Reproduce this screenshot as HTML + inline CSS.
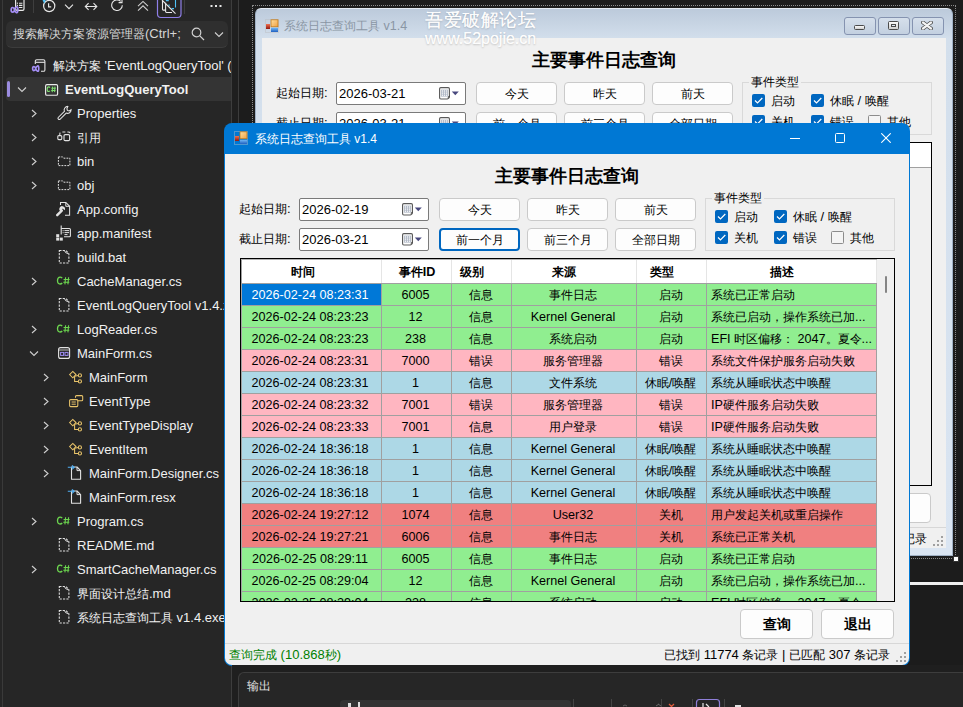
<!DOCTYPE html><html><head><meta charset="utf-8"><style>
*{box-sizing:border-box;margin:0;padding:0}
html,body{width:963px;height:707px;overflow:hidden;background:#1c1c1c;font-family:"Liberation Sans", sans-serif;}
.abs{position:absolute}
#left{position:absolute;left:0;top:0;width:232px;height:707px;background:#262626;border-right:1px solid #3d3d3d;overflow:hidden}
#left .lb{position:absolute;left:2px;top:0;width:1px;height:707px;background:#3a3a3a}
.search{position:absolute;left:6px;top:21px;width:222px;height:27px;background:#2f2f2f;border-radius:6px;border-bottom:1px solid #3c3c3c}
.search > span{position:absolute;left:7px;top:5px;font-size:13px;color:#d6d6d6;white-space:nowrap}
.tr{position:absolute;height:24px;left:0;width:232px;white-space:nowrap;color:#f1f1f1;font-size:13px}
.tr .t{position:absolute;top:5px}
.tr svg{position:absolute}
#gap{position:absolute;left:232px;top:0;width:7px;height:707px;background:#1f1f1f;border-right:1px solid #3c3c3c}
.win{position:absolute}
.client{position:absolute;background:#f0f0f0;overflow:hidden;font-size:13px;color:#000}
.lbl{position:absolute;white-space:nowrap;font-size:13px}
.dtp{position:absolute;width:130px;height:23px;background:#fff;border:1px solid #7a7a7a;border-radius:2px}
.dtp span{position:absolute;left:2px;top:3px;font-size:13px}
.btn{position:absolute;width:81px;height:23px;background:#fdfdfd;border:1px solid #cacaca;border-radius:4px;text-align:center;font-size:13px;line-height:22px}
.gb{position:absolute;border:1px solid #d9d9d9;border-radius:0}
.cb{position:absolute;width:13px;height:13px;background:#0067c0;border-radius:2px}
.cbu{position:absolute;width:13px;height:13px;background:#f4f4f4;border:1px solid #8c8c8c;border-radius:1.5px}
.grid{position:absolute;background:#f0f0f0;border:1px solid #000;overflow:hidden}
.hdr{position:absolute;left:0;top:0;height:25px;background:#fff;border-bottom:1px solid #a0a0a0}
.hc{position:absolute;top:0;height:24px;border-right:1px solid #e5e5e5}
.row{position:absolute;left:0;height:22px}
.c{position:absolute;top:0;height:22px;padding-right:2px;border-right:1px solid #a0a0a0;border-bottom:1px solid #a0a0a0;text-align:center;font-size:12.6px;line-height:23px;white-space:nowrap;overflow:hidden}
</style></head><body><div id="left"><div class="lb"></div><div class="search"><span><span style="font-size:12px">搜索解决方案资源管理器</span><span style="font-size:13px">(Ctrl+;</span></span><svg style="position:absolute;left:185px;top:6px" width="14" height="14" viewBox="0 0 14 14"><circle cx="5.5" cy="5.5" r="4.3" fill="none" stroke="#d0d0d0" stroke-width="1.2"/><path d="M8.6 8.6L13 13" stroke="#d0d0d0" stroke-width="1.2"/></svg><svg style="position:absolute;left:208px;top:10px" width="10" height="7" viewBox="0 0 10 7"><path d="M1 1.5L5 5.5 9 1.5" fill="none" stroke="#d0d0d0" stroke-width="1.1"/></svg></div><svg class="abs" style="left:0;top:0" width="232" height="20" viewBox="0 0 232 20"><path d="M15.6 -1v9.8q0 1.6 1.6 1.6h5.4q1.4 0 1.4-1.4V-1" fill="none" stroke="#e8e8e8" stroke-width="1.2"/><rect x="16.8" y="2.6" width="1.2" height="1.2" fill="#ddd"/><rect x="16.8" y="4.8" width="1.2" height="1.2" fill="#ddd"/><path d="M19 3.2h3.4M19 5.4h3.4M19 7.5h3.4" stroke="#e8e8e8" stroke-width="1.1"/><path d="M11.2 9.8q0-2.3 1.4-2.3t1.9 2.3 1.9 2.8 1.5-2.8-1.5-2.8-1.9 2.8-1.9 2.3-1.4-2.3z" fill="none" stroke="#a48ef5" stroke-width="1.7"/><rect x="33" y="0" width="1" height="13" fill="#3e3e3e"/><circle cx="49.2" cy="6" r="5.6" fill="none" stroke="#e6e6e6" stroke-width="1.2"/><path d="M48.6 3.2v3.6h2.6" fill="none" stroke="#e6e6e6" stroke-width="1.2"/><path d="M42.3 -0.5h3.6l-1.6 4.2z" fill="#4fc3f7"/><path d="M65 4.6l4 4 4-4" fill="none" stroke="#e6e6e6" stroke-width="1.1"/><path d="M85.3 6.5h11.5 M88.6 3.2l-3.3 3.3 3.3 3.3 M93.5 3.2l3.3 3.3-3.3 3.3" fill="none" stroke="#e6e6e6" stroke-width="1.1"/><path d="M122.3 5.2a5.3 5.3 0 1 1-1.6-3.8" fill="none" stroke="#e6e6e6" stroke-width="1.1"/><path d="M118.6 2.6h3.4v-3.4" fill="none" stroke="#e6e6e6" stroke-width="1.1"/><path d="M138 6.2l5-4.8 5 4.8 M138 10.6l5-4.8 5 4.8" fill="none" stroke="#cfcfcf" stroke-width="1.1"/><rect x="157.5" y="-4" width="23.5" height="21.5" rx="3.5" fill="none" stroke="#8f7fe8" stroke-width="1.2"/><path d="M162.5 1v8.3q0 0.8 0.8 0.8h2.2" fill="none" stroke="#e8e8e8" stroke-width="1.1"/><path d="M165.6 2.8v8.8q0 0.9 0.9 0.9h5.5" fill="none" stroke="#e8e8e8" stroke-width="1.1"/><path d="M165.8 0.6h3M172 -1v0.5M175.5 0v7.5M174 8.6h-2.4M169 6.5v-2" fill="none" stroke="#4fc3f7" stroke-width="1.1"/><path d="M162 0l13.5 13.6" stroke="#e8e8e8" stroke-width="1.1"/><rect x="184" y="0" width="1" height="14" fill="#3e3e3e"/><rect x="210.5" y="5" width="2" height="2" fill="#e6e6e6"/><rect x="215" y="5" width="2" height="2" fill="#e6e6e6"/><rect x="219.5" y="5" width="2" height="2" fill="#e6e6e6"/></svg><div class="tr" style="top:53px"><svg style="left:31px;top:6px" width="16" height="16" viewBox="0 0 16 16"><path d="M4.3 5V2.3q0-1.6 1.6-1.6h6.4q1.6 0 1.6 1.6v8.6q0 1.4-1.4 1.4H10" fill="none" stroke="#e6e6e6" stroke-width="1.1"/><path d="M4.3 3.3h9.6" stroke="#e6e6e6" stroke-width="1.1"/><path d="M1.6 9.6q0-2 1.3-2t1.8 2 1.8 2.6 1.3-2.6-1.3-2.6-1.8 2.6-1.8 2-1.3-2z" fill="none" stroke="#a48ef5" stroke-width="1.6"/></svg><span class="t" style="left:53px;"><span style="font-size:12px">解决方案</span><span style="font-size:13px"> &#x27;EventLogQueryTool&#x27; (</span></span></div>
<div class="tr" style="top:77px"><div class="abs" style="left:6px;top:0px;width:226px;height:24px;background:#343434;border-radius:4px 0 0 4px"></div><div class="abs" style="left:7px;top:4px;width:3px;height:16px;background:#9b8ce0;border-radius:2px"></div><svg style="left:17px;top:9px" width="10" height="7" viewBox="0 0 10 7"><path d="M1 1.5 L5 5.5 L9 1.5" fill="none" stroke="#cfcfcf" stroke-width="1.1"/></svg><svg style="left:45px;top:7px" width="14" height="12" viewBox="0 0 14 12"><rect x="0.6" y="0.6" width="12" height="10.6" rx="1.3" fill="none" stroke="#eaeaea" stroke-width="1.15"/><path d="M5 3.6q-0.5-0.7-1.3-0.7-1.5 0-1.5 2.3t1.5 2.3q0.8 0 1.3-0.7" fill="none" stroke="#7fe070" stroke-width="1.1"/><path d="M7.6 2.6l-0.4 5.5M10 2.6l-0.4 5.5M6.4 4.3h4.4M6.2 6.4h4.4" stroke="#7fe070" stroke-width="1.05"/></svg><span class="t" style="left:65px;font-weight:bold;"><span style="font-size:13px">EventLogQueryTool</span></span></div>
<div class="tr" style="top:101px"><svg style="left:30px;top:8px" width="8" height="9" viewBox="0 0 8 9"><path d="M2 1 L6 4.5 L2 8" fill="none" stroke="#cfcfcf" stroke-width="1.1"/></svg><svg style="left:53px;top:2px" width="20" height="20" viewBox="0 0 20 20"><path d="M14.8 3.4a3.6 3.6 0 0 0-3.4 4.9L5.2 14.5a1.3 1.3 0 0 0 1.8 1.8l6.2-6.2a3.6 3.6 0 0 0 4.9-3.4l-2 1.2-1.7-0.5-0.5-1.7z" fill="none" stroke="#e2e2e2" stroke-width="1.05"/></svg><span class="t" style="left:77px;"><span style="font-size:13px">Properties</span></span></div>
<div class="tr" style="top:125px"><svg style="left:30px;top:8px" width="8" height="9" viewBox="0 0 8 9"><path d="M2 1 L6 4.5 L2 8" fill="none" stroke="#cfcfcf" stroke-width="1.1"/></svg><svg style="left:53px;top:2px" width="20" height="20" viewBox="0 0 20 20"><rect x="4.8" y="8.6" width="4" height="4" rx="1" fill="none" stroke="#e2e2e2" stroke-width="1.1"/><rect x="11" y="7.6" width="5.6" height="6" rx="1.2" fill="none" stroke="#e2e2e2" stroke-width="1.1"/><path d="M6.8 8.6V7q0-2 2-2h6.5q2 0 2 2v0.6" fill="none" stroke="#e2e2e2" stroke-width="1.1" stroke-dasharray="3 2"/></svg><span class="t" style="left:77px;"><span style="font-size:12px">引用</span></span></div>
<div class="tr" style="top:149px"><svg style="left:30px;top:8px" width="8" height="9" viewBox="0 0 8 9"><path d="M2 1 L6 4.5 L2 8" fill="none" stroke="#cfcfcf" stroke-width="1.1"/></svg><svg style="left:53px;top:2px" width="20" height="20" viewBox="0 0 20 20"><path d="M5.4 5.9h4.2l1.1 1.3h6.2v7.4H5.4z" fill="none" stroke="#e2e2e2" stroke-width="1" stroke-dasharray="1.8 1.1"/></svg><span class="t" style="left:77px;"><span style="font-size:13px">bin</span></span></div>
<div class="tr" style="top:173px"><svg style="left:30px;top:8px" width="8" height="9" viewBox="0 0 8 9"><path d="M2 1 L6 4.5 L2 8" fill="none" stroke="#cfcfcf" stroke-width="1.1"/></svg><svg style="left:53px;top:2px" width="20" height="20" viewBox="0 0 20 20"><path d="M5.4 5.9h4.2l1.1 1.3h6.2v7.4H5.4z" fill="none" stroke="#e2e2e2" stroke-width="1" stroke-dasharray="1.8 1.1"/></svg><span class="t" style="left:77px;"><span style="font-size:13px">obj</span></span></div>
<div class="tr" style="top:197px"><svg style="left:53px;top:2px" width="20" height="20" viewBox="0 0 20 20"><path d="M7.5 6V3.5h5.3l3.8 3.8v9h-4.6" fill="none" stroke="#e2e2e2" stroke-width="1.05"/><path d="M12.8 3.5v3.8h3.8" fill="none" stroke="#e2e2e2" stroke-width="1"/><path d="M4.2 16.2l4.6-4.6" stroke="#e2e2e2" stroke-width="2.4" stroke-linecap="round"/><path d="M8 12.5a2.8 2.8 0 1 1 3.6-1.2l-1.9-1.9z" fill="#e2e2e2"/></svg><span class="t" style="left:77px;"><span style="font-size:13px">App.config</span></span></div>
<div class="tr" style="top:221px"><svg style="left:53px;top:2px" width="20" height="20" viewBox="0 0 20 20"><path d="M8.2 2.5v9" stroke="#e2e2e2" stroke-width="1.1"/><path d="M8.2 5.5h8.2q1 0 1 1v6.2q0 1-1 1H11" fill="none" stroke="#e2e2e2" stroke-width="1.1"/><path d="M11.5 7.6h4.6M11.5 9.6h4.6M11.5 11.6h3" stroke="#e2e2e2" stroke-width="1"/><rect x="9.6" y="7.2" width="1" height="1" fill="#e2e2e2"/><rect x="9.6" y="9.2" width="1" height="1" fill="#e2e2e2"/><rect x="3.2" y="11.2" width="3" height="3" fill="#e2e2e2"/><rect x="3.2" y="14.6" width="3" height="3" fill="#e2e2e2"/><rect x="6.8" y="14.6" width="3" height="3" fill="#e2e2e2"/></svg><span class="t" style="left:77px;"><span style="font-size:13px">app.manifest</span></span></div>
<div class="tr" style="top:245px"><svg style="left:53px;top:2px" width="20" height="20" viewBox="0 0 20 20"><path d="M6.3 3.5h5.8q0.8 0 1.4 0.6l1.8 1.8q0.6 0.6 0.6 1.4v8.7h-9.6z" fill="none" stroke="#e2e2e2" stroke-width="1.05" stroke-dasharray="2.2 1.2"/><path d="M11.6 3.8q0.4 2.4 3.6 2.8" fill="none" stroke="#e2e2e2" stroke-width="1"/></svg><span class="t" style="left:77px;"><span style="font-size:13px">build.bat</span></span></div>
<div class="tr" style="top:269px"><svg style="left:30px;top:8px" width="8" height="9" viewBox="0 0 8 9"><path d="M2 1 L6 4.5 L2 8" fill="none" stroke="#cfcfcf" stroke-width="1.1"/></svg><svg style="left:53px;top:2px" width="20" height="20" viewBox="0 0 20 20"><path d="M9.2 7.2q-0.8-1-2.1-1-2.6 0-2.6 3.4t2.6 3.4q1.3 0 2.1-1" fill="none" stroke="#6cd64f" stroke-width="1.3"/><path d="M12.6 6.2l-0.7 7.2M15.6 6.2l-0.7 7.2M10.6 8.5h6M10.3 11.2h6" stroke="#6cd64f" stroke-width="1.1"/></svg><span class="t" style="left:77px;"><span style="font-size:13px">CacheManager.cs</span></span></div>
<div class="tr" style="top:293px"><svg style="left:53px;top:2px" width="20" height="20" viewBox="0 0 20 20"><path d="M6.3 3.5h5.8q0.8 0 1.4 0.6l1.8 1.8q0.6 0.6 0.6 1.4v8.7h-9.6z" fill="none" stroke="#e2e2e2" stroke-width="1.05" stroke-dasharray="2.2 1.2"/><path d="M11.6 3.8q0.4 2.4 3.6 2.8" fill="none" stroke="#e2e2e2" stroke-width="1"/></svg><span class="t" style="left:77px;"><span style="font-size:13px">EventLogQueryTool v1.4.zip</span></span></div>
<div class="tr" style="top:317px"><svg style="left:30px;top:8px" width="8" height="9" viewBox="0 0 8 9"><path d="M2 1 L6 4.5 L2 8" fill="none" stroke="#cfcfcf" stroke-width="1.1"/></svg><svg style="left:53px;top:2px" width="20" height="20" viewBox="0 0 20 20"><path d="M9.2 7.2q-0.8-1-2.1-1-2.6 0-2.6 3.4t2.6 3.4q1.3 0 2.1-1" fill="none" stroke="#6cd64f" stroke-width="1.3"/><path d="M12.6 6.2l-0.7 7.2M15.6 6.2l-0.7 7.2M10.6 8.5h6M10.3 11.2h6" stroke="#6cd64f" stroke-width="1.1"/></svg><span class="t" style="left:77px;"><span style="font-size:13px">LogReader.cs</span></span></div>
<div class="tr" style="top:341px"><svg style="left:29px;top:9px" width="10" height="7" viewBox="0 0 10 7"><path d="M1 1.5 L5 5.5 L9 1.5" fill="none" stroke="#cfcfcf" stroke-width="1.1"/></svg><svg style="left:53px;top:2px" width="20" height="20" viewBox="0 0 20 20"><rect x="5.6" y="4.6" width="11" height="10.8" rx="2" fill="none" stroke="#e2e2e2" stroke-width="1.1"/><path d="M5.6 7h11" stroke="#e2e2e2" stroke-width="0.8"/><rect x="7.6" y="9.4" width="3" height="3" fill="none" stroke="#9d8cf0" stroke-width="1"/><rect x="12" y="9.4" width="3" height="3" fill="none" stroke="#9d8cf0" stroke-width="1"/></svg><span class="t" style="left:77px;"><span style="font-size:13px">MainForm.cs</span></span></div>
<div class="tr" style="top:365px"><svg style="left:42px;top:8px" width="8" height="9" viewBox="0 0 8 9"><path d="M2 1 L6 4.5 L2 8" fill="none" stroke="#cfcfcf" stroke-width="1.1"/></svg><svg style="left:65px;top:2px" width="20" height="20" viewBox="0 0 20 20"><path d="M4.6 7.6l3.2-3.2 3.2 3.2-3.2 3.2z" fill="none" stroke="#e9c46a" stroke-width="1.05"/><path d="M9.6 9.4v5h3.6M9.4 9.2l4 -0.6" fill="none" stroke="#e9c46a" stroke-width="1.05"/><circle cx="14.9" cy="8.4" r="1.6" fill="none" stroke="#e9c46a" stroke-width="1.05"/><circle cx="14.9" cy="14.4" r="1.6" fill="none" stroke="#e9c46a" stroke-width="1.05"/></svg><span class="t" style="left:89px;"><span style="font-size:13px">MainForm</span></span></div>
<div class="tr" style="top:389px"><svg style="left:42px;top:8px" width="8" height="9" viewBox="0 0 8 9"><path d="M2 1 L6 4.5 L2 8" fill="none" stroke="#cfcfcf" stroke-width="1.1"/></svg><svg style="left:65px;top:2px" width="20" height="20" viewBox="0 0 20 20"><path d="M10.5 6.8V5.6q0-1 1-1h5.2q1 0 1 1v3.2q0 1-1 1h-4" fill="none" stroke="#e9c46a" stroke-width="1.05"/><rect x="4.6" y="8.6" width="8.2" height="7" rx="1" fill="none" stroke="#e9c46a" stroke-width="1.05"/><path d="M6.6 11h4.2M6.6 13.2h4.2" stroke="#e9c46a" stroke-width="1"/></svg><span class="t" style="left:89px;"><span style="font-size:13px">EventType</span></span></div>
<div class="tr" style="top:413px"><svg style="left:42px;top:8px" width="8" height="9" viewBox="0 0 8 9"><path d="M2 1 L6 4.5 L2 8" fill="none" stroke="#cfcfcf" stroke-width="1.1"/></svg><svg style="left:65px;top:2px" width="20" height="20" viewBox="0 0 20 20"><path d="M4.6 7.6l3.2-3.2 3.2 3.2-3.2 3.2z" fill="none" stroke="#e9c46a" stroke-width="1.05"/><path d="M9.6 9.4v5h3.6M9.4 9.2l4 -0.6" fill="none" stroke="#e9c46a" stroke-width="1.05"/><circle cx="14.9" cy="8.4" r="1.6" fill="none" stroke="#e9c46a" stroke-width="1.05"/><circle cx="14.9" cy="14.4" r="1.6" fill="none" stroke="#e9c46a" stroke-width="1.05"/></svg><span class="t" style="left:89px;"><span style="font-size:13px">EventTypeDisplay</span></span></div>
<div class="tr" style="top:437px"><svg style="left:42px;top:8px" width="8" height="9" viewBox="0 0 8 9"><path d="M2 1 L6 4.5 L2 8" fill="none" stroke="#cfcfcf" stroke-width="1.1"/></svg><svg style="left:65px;top:2px" width="20" height="20" viewBox="0 0 20 20"><path d="M4.6 7.6l3.2-3.2 3.2 3.2-3.2 3.2z" fill="none" stroke="#e9c46a" stroke-width="1.05"/><path d="M9.6 9.4v5h3.6M9.4 9.2l4 -0.6" fill="none" stroke="#e9c46a" stroke-width="1.05"/><circle cx="14.9" cy="8.4" r="1.6" fill="none" stroke="#e9c46a" stroke-width="1.05"/><circle cx="14.9" cy="14.4" r="1.6" fill="none" stroke="#e9c46a" stroke-width="1.05"/></svg><span class="t" style="left:89px;"><span style="font-size:13px">EventItem</span></span></div>
<div class="tr" style="top:461px"><svg style="left:42px;top:8px" width="8" height="9" viewBox="0 0 8 9"><path d="M2 1 L6 4.5 L2 8" fill="none" stroke="#cfcfcf" stroke-width="1.1"/></svg><svg style="left:65px;top:2px" width="20" height="20" viewBox="0 0 20 20"><path d="M6.5 4h5.5l3.6 3.6v8.7h-9.1z" fill="none" stroke="#e2e2e2" stroke-width="1.1" stroke-linejoin="round"/><path d="M12 4v3.6h3.6" fill="none" stroke="#e2e2e2" stroke-width="1"/><path d="M2.8 4.3h6.4M7 2.3l2.2 2-2.2 2" fill="none" stroke="#4fb0f5" stroke-width="1.1"/></svg><span class="t" style="left:89px;"><span style="font-size:13px">MainForm.Designer.cs</span></span></div>
<div class="tr" style="top:485px"><svg style="left:65px;top:2px" width="20" height="20" viewBox="0 0 20 20"><path d="M6.5 4h5.5l3.6 3.6v8.7h-9.1z" fill="none" stroke="#e2e2e2" stroke-width="1.1" stroke-linejoin="round"/><path d="M12 4v3.6h3.6" fill="none" stroke="#e2e2e2" stroke-width="1"/><path d="M2.8 4.3h6.4M7 2.3l2.2 2-2.2 2" fill="none" stroke="#4fb0f5" stroke-width="1.1"/></svg><span class="t" style="left:89px;"><span style="font-size:13px">MainForm.resx</span></span></div>
<div class="tr" style="top:509px"><svg style="left:30px;top:8px" width="8" height="9" viewBox="0 0 8 9"><path d="M2 1 L6 4.5 L2 8" fill="none" stroke="#cfcfcf" stroke-width="1.1"/></svg><svg style="left:53px;top:2px" width="20" height="20" viewBox="0 0 20 20"><path d="M9.2 7.2q-0.8-1-2.1-1-2.6 0-2.6 3.4t2.6 3.4q1.3 0 2.1-1" fill="none" stroke="#6cd64f" stroke-width="1.3"/><path d="M12.6 6.2l-0.7 7.2M15.6 6.2l-0.7 7.2M10.6 8.5h6M10.3 11.2h6" stroke="#6cd64f" stroke-width="1.1"/></svg><span class="t" style="left:77px;"><span style="font-size:13px">Program.cs</span></span></div>
<div class="tr" style="top:533px"><svg style="left:53px;top:2px" width="20" height="20" viewBox="0 0 20 20"><path d="M6.3 3.5h5.8q0.8 0 1.4 0.6l1.8 1.8q0.6 0.6 0.6 1.4v8.7h-9.6z" fill="none" stroke="#e2e2e2" stroke-width="1.05" stroke-dasharray="2.2 1.2"/><path d="M11.6 3.8q0.4 2.4 3.6 2.8" fill="none" stroke="#e2e2e2" stroke-width="1"/></svg><span class="t" style="left:77px;"><span style="font-size:13px">README.md</span></span></div>
<div class="tr" style="top:557px"><svg style="left:30px;top:8px" width="8" height="9" viewBox="0 0 8 9"><path d="M2 1 L6 4.5 L2 8" fill="none" stroke="#cfcfcf" stroke-width="1.1"/></svg><svg style="left:53px;top:2px" width="20" height="20" viewBox="0 0 20 20"><path d="M9.2 7.2q-0.8-1-2.1-1-2.6 0-2.6 3.4t2.6 3.4q1.3 0 2.1-1" fill="none" stroke="#6cd64f" stroke-width="1.3"/><path d="M12.6 6.2l-0.7 7.2M15.6 6.2l-0.7 7.2M10.6 8.5h6M10.3 11.2h6" stroke="#6cd64f" stroke-width="1.1"/></svg><span class="t" style="left:77px;"><span style="font-size:13px">SmartCacheManager.cs</span></span></div>
<div class="tr" style="top:581px"><svg style="left:53px;top:2px" width="20" height="20" viewBox="0 0 20 20"><path d="M6.3 3.5h5.8q0.8 0 1.4 0.6l1.8 1.8q0.6 0.6 0.6 1.4v8.7h-9.6z" fill="none" stroke="#e2e2e2" stroke-width="1.05" stroke-dasharray="2.2 1.2"/><path d="M11.6 3.8q0.4 2.4 3.6 2.8" fill="none" stroke="#e2e2e2" stroke-width="1"/></svg><span class="t" style="left:77px;"><span style="font-size:12px">界面设计总结</span><span style="font-size:13px">.md</span></span></div>
<div class="tr" style="top:605px"><svg style="left:53px;top:2px" width="20" height="20" viewBox="0 0 20 20"><path d="M6.3 3.5h5.8q0.8 0 1.4 0.6l1.8 1.8q0.6 0.6 0.6 1.4v8.7h-9.6z" fill="none" stroke="#e2e2e2" stroke-width="1.05" stroke-dasharray="2.2 1.2"/><path d="M11.6 3.8q0.4 2.4 3.6 2.8" fill="none" stroke="#e2e2e2" stroke-width="1"/></svg><span class="t" style="left:77px;"><span style="font-size:12px">系统日志查询工具</span><span style="font-size:13px"> v1.4.exe</span></span></div></div><div id="gap"></div><div class="abs" style="left:252px;top:5px;width:704px;height:554px;border:1px dotted #8a8a8a"></div><div class="win" style="left:255px;top:8px;width:698px;height:548px;background:linear-gradient(#bccadb,#d3dfec 30px,#dae5f2);border:1px solid #9fb0c4;border-top-color:#e4ebf2;border-radius:6px 6px 0 0"></div><svg class="abs" style="left:265px;top:19px" width="14" height="14" viewBox="0 0 14 14"><defs><linearGradient id="gr" x1="0" y1="0" x2="0" y2="1"><stop offset="0" stop-color="#f07050"/><stop offset="1" stop-color="#901810"/></linearGradient><linearGradient id="go" x1="0" y1="0" x2="1" y2="1"><stop offset="0" stop-color="#ffe0a0"/><stop offset="1" stop-color="#f0a040"/></linearGradient><linearGradient id="gb" x1="0" y1="0" x2="0" y2="1"><stop offset="0" stop-color="#70b8f8"/><stop offset="1" stop-color="#2060c0"/></linearGradient></defs><rect x="0.5" y="0.5" width="13" height="13" fill="none" stroke="#b8b8b8" stroke-width="0.8" stroke-dasharray="1 1"/><rect x="1" y="5" width="4" height="5" fill="url(#gr)"/><rect x="6" y="0.8" width="7" height="7" fill="url(#go)" stroke="#c07818" stroke-width="0.8"/><rect x="6" y="8.8" width="7" height="4.2" fill="url(#gb)"/></svg><div class="lbl" style="left:284px;top:18px;color:#8a96a4;font-size:13px"><span style="font-size:12px">系统日志查询工具</span><span style="font-size:12.5px"> v1.4</span></div><div class="abs" style="left:844px;top:17px;width:32px;height:18px;border:1px solid #8593b0;border-radius:3px;background:linear-gradient(#d5dfeb,#c3d0e0)"></div><div class="abs" style="left:878px;top:17px;width:32px;height:18px;border:1px solid #8593b0;border-radius:3px;background:linear-gradient(#d5dfeb,#c3d0e0)"></div><div class="abs" style="left:912px;top:17px;width:32px;height:18px;border:1px solid #8593b0;border-radius:3px;background:linear-gradient(#d5dfeb,#c3d0e0)"></div><div class="abs" style="left:854px;top:25px;width:11px;height:5px;border:1px solid #4a4a4a;background:linear-gradient(#fafafa,#d0d0d0);border-radius:1.5px"></div><div class="abs" style="left:888px;top:21px;width:11px;height:9px;border:1.5px solid #4a4a4a;background:linear-gradient(#fafafa,#d0d0d0);border-radius:1.5px"></div><div class="abs" style="left:891px;top:24px;width:5px;height:3px;border:1px solid #4a4a4a;background:#dfe8f2"></div><svg class="abs" style="left:921px;top:21px" width="12" height="9" viewBox="0 0 12 9"><path d="M2 1.5l8 6 M10 1.5l-8 6" stroke="#4a4a4a" stroke-width="3.8" stroke-linecap="round"/><path d="M2 1.5l8 6 M10 1.5l-8 6" stroke="#f4f4f4" stroke-width="2.2" stroke-linecap="round"/></svg><div class="client" style="left:262px;top:38px;width:684px;height:510px"><div class="lbl" style="left:0;width:684px;top:10px;text-align:center;font-size:18px;font-weight:bold;letter-spacing:0px">主要事件日志查询</div><div class="lbl" style="left:14px;top:47px"><span style="font-size:12px">起始日期</span><span style="font-size:13px">:</span></div><div class="lbl" style="left:14px;top:77px"><span style="font-size:12px">截止日期</span><span style="font-size:13px">:</span></div><div class="dtp" style="left:74px;top:44px"><span>2026-03-21</span><svg style="position:absolute;left:102px;top:4px" width="22" height="13" viewBox="0 0 22 13"><path d="M1.8 0.6h7.4q1.2 0 1.2 1.2v8q0 0.6-0.6 1.2l-0.4 0.4q-0.6 0.6-1.2 0.6H1.8q-1.2 0-1.2-1.2V1.8q0-1.2 1.2-1.2z" fill="#fff" stroke="#5a5a5a" stroke-width="1.15"/><rect x="2" y="2.6" width="7" height="7" fill="#b0b8c6"/><g fill="#fff"><rect x="2.8" y="3.4" width="1.2" height="1.2"/><rect x="4.9" y="3.4" width="1.2" height="1.2"/><rect x="7" y="3.4" width="1.2" height="1.2"/><rect x="2.8" y="5.5" width="1.2" height="1.2"/><rect x="4.9" y="5.5" width="1.2" height="1.2"/><rect x="7" y="5.5" width="1.2" height="1.2"/><rect x="2.8" y="7.6" width="1.2" height="1.2"/><rect x="4.9" y="7.6" width="1.2" height="1.2"/><rect x="7" y="7.6" width="1.2" height="1.2"/></g><path d="M8.4 10.6l2-2v2z" fill="#333"/><path d="M12.8 4.4h7l-3.5 3.8z" fill="#48487e"/></svg></div><div class="dtp" style="left:74px;top:74px"><span>2026-03-21</span><svg style="position:absolute;left:102px;top:4px" width="22" height="13" viewBox="0 0 22 13"><path d="M1.8 0.6h7.4q1.2 0 1.2 1.2v8q0 0.6-0.6 1.2l-0.4 0.4q-0.6 0.6-1.2 0.6H1.8q-1.2 0-1.2-1.2V1.8q0-1.2 1.2-1.2z" fill="#fff" stroke="#5a5a5a" stroke-width="1.15"/><rect x="2" y="2.6" width="7" height="7" fill="#b0b8c6"/><g fill="#fff"><rect x="2.8" y="3.4" width="1.2" height="1.2"/><rect x="4.9" y="3.4" width="1.2" height="1.2"/><rect x="7" y="3.4" width="1.2" height="1.2"/><rect x="2.8" y="5.5" width="1.2" height="1.2"/><rect x="4.9" y="5.5" width="1.2" height="1.2"/><rect x="7" y="5.5" width="1.2" height="1.2"/><rect x="2.8" y="7.6" width="1.2" height="1.2"/><rect x="4.9" y="7.6" width="1.2" height="1.2"/><rect x="7" y="7.6" width="1.2" height="1.2"/></g><path d="M8.4 10.6l2-2v2z" fill="#333"/><path d="M12.8 4.4h7l-3.5 3.8z" fill="#48487e"/></svg></div><div class="btn" style="left:214px;top:44px"><span style="font-size:12px">今天</span></div><div class="btn" style="left:302px;top:44px"><span style="font-size:12px">昨天</span></div><div class="btn" style="left:390px;top:44px"><span style="font-size:12px">前天</span></div><div class="btn" style="left:214px;top:74px;"><span style="font-size:12px">前一个月</span></div><div class="btn" style="left:302px;top:74px;"><span style="font-size:12px">前三个月</span></div><div class="btn" style="left:390px;top:74px;"><span style="font-size:12px">全部日期</span></div><div class="gb" style="left:480px;top:44px;width:190px;height:53px"></div><div class="lbl" style="left:487px;top:36px;background:#f0f0f0;padding:0 2px;font-size:13px"><span style="font-size:12px">事件类型</span></div><div class="cb" style="left:490px;top:56px"><svg style="position:absolute;left:0;top:0" width="13" height="13" viewBox="0 0 13 13"><path d="M3 6.5l2.5 2.5 4.8-5" fill="none" stroke="#fff" stroke-width="1.2"/></svg></div><div class="lbl" style="left:509px;top:55px"><span style="font-size:12px">启动</span></div><div class="cb" style="left:549px;top:56px"><svg style="position:absolute;left:0;top:0" width="13" height="13" viewBox="0 0 13 13"><path d="M3 6.5l2.5 2.5 4.8-5" fill="none" stroke="#fff" stroke-width="1.2"/></svg></div><div class="lbl" style="left:568px;top:55px"><span style="font-size:12px">休眠</span><span style="font-size:13px"> / </span><span style="font-size:12px">唤醒</span></div><div class="cb" style="left:490px;top:77px"><svg style="position:absolute;left:0;top:0" width="13" height="13" viewBox="0 0 13 13"><path d="M3 6.5l2.5 2.5 4.8-5" fill="none" stroke="#fff" stroke-width="1.2"/></svg></div><div class="lbl" style="left:509px;top:76px"><span style="font-size:12px">关机</span></div><div class="cb" style="left:549px;top:77px"><svg style="position:absolute;left:0;top:0" width="13" height="13" viewBox="0 0 13 13"><path d="M3 6.5l2.5 2.5 4.8-5" fill="none" stroke="#fff" stroke-width="1.2"/></svg></div><div class="lbl" style="left:568px;top:76px"><span style="font-size:12px">错误</span></div><div class="cbu" style="left:606px;top:77px"></div><div class="lbl" style="left:625px;top:76px"><span style="font-size:12px">其他</span></div><div class="grid" style="left:15px;top:104px;width:655px;height:344px"><div class="hdr" style="width:654px"><div class="abs" style="left:22px;width:80px;top:0;height:25px;line-height:25px;text-align:center;font-weight:bold"><span style="font-size:12px">时间</span></div><div class="abs" style="left:136px;width:80px;top:0;height:25px;line-height:25px;text-align:center;font-weight:bold"><span style="font-size:12px">事件</span><span style="font-size:12.6px">ID</span></div><div class="abs" style="left:190.6px;width:80px;top:0;height:25px;line-height:25px;text-align:center;font-weight:bold"><span style="font-size:12px">级别</span></div><div class="abs" style="left:283px;width:80px;top:0;height:25px;line-height:25px;text-align:center;font-weight:bold"><span style="font-size:12px">来源</span></div><div class="abs" style="left:380.6px;width:80px;top:0;height:25px;line-height:25px;text-align:center;font-weight:bold"><span style="font-size:12px">类型</span></div><div class="abs" style="left:501px;width:80px;top:0;height:25px;line-height:25px;text-align:center;font-weight:bold"><span style="font-size:12px">描述</span></div></div></div><div class="btn" style="left:515px;top:455px;width:73px;height:30px;line-height:28px;font-weight:bold;font-size:14px">查询</div><div class="btn" style="left:596px;top:455px;width:73px;height:30px;line-height:28px;font-weight:bold;font-size:14px">退出</div><div class="abs" style="left:0;top:489px;width:684px;height:1px;background:#d7d7d7"></div><div class="lbl" style="right:19px;top:493px"><span style="font-size:12px">已找到</span><span style="font-size:13px"> 11774 </span><span style="font-size:12px">条记录</span><span style="font-size:13px"> | </span><span style="font-size:12px">已匹配</span><span style="font-size:13px"> 307 </span><span style="font-size:12px">条记录</span></div><svg style="position:absolute;left:671px;top:498px" width="12" height="12" viewBox="0 0 12 12"><g fill="#a0a0a0"><rect x="8" y="0" width="2" height="2"/><rect x="4" y="4" width="2" height="2"/><rect x="8" y="4" width="2" height="2"/><rect x="0" y="8" width="2" height="2"/><rect x="4" y="8" width="2" height="2"/><rect x="8" y="8" width="2" height="2"/></g></svg></div><div class="abs" style="left:953px;top:556px;width:6px;height:6px;background:#fff;border:1px solid #333"></div><div class="abs" style="left:910px;top:582px;width:53px;height:3px;background:#f0f0f0"></div><div class="lbl" style="left:425px;top:8px;font-size:18px;letter-spacing:0.5px;color:rgba(255,255,255,0.95);text-shadow:0 1px 2px rgba(0,0,0,0.18),0 0 0.4px #fff">吾爱破解论坛</div><div class="lbl" style="left:425px;top:30px;font-size:16px;color:rgba(255,255,255,0.95);text-shadow:0 1px 2px rgba(0,0,0,0.2),0 0 0.4px #fff">www.52pojie.cn</div><div class="win" style="left:224px;top:123px;width:686px;height:543px;background:#0078d4;border-radius:8px;overflow:hidden"><svg class="abs" style="left:10px;top:8px" width="14" height="14" viewBox="0 0 14 14"><defs><linearGradient id="gr" x1="0" y1="0" x2="0" y2="1"><stop offset="0" stop-color="#f07050"/><stop offset="1" stop-color="#901810"/></linearGradient><linearGradient id="go" x1="0" y1="0" x2="1" y2="1"><stop offset="0" stop-color="#ffe0a0"/><stop offset="1" stop-color="#f0a040"/></linearGradient><linearGradient id="gb" x1="0" y1="0" x2="0" y2="1"><stop offset="0" stop-color="#70b8f8"/><stop offset="1" stop-color="#2060c0"/></linearGradient></defs><rect x="0.5" y="0.5" width="13" height="13" fill="none" stroke="#c8c8c8" stroke-width="0.8" stroke-dasharray="1 1"/><rect x="1" y="5" width="4" height="5" fill="url(#gr)"/><rect x="6" y="0.8" width="7" height="7" fill="url(#go)" stroke="#c07818" stroke-width="0.8"/><rect x="6" y="8.8" width="7" height="4.2" fill="url(#gb)"/></svg><div class="lbl" style="left:31px;top:8px;color:#fff;font-size:13px"><span style="font-size:12px">系统日志查询工具</span><span style="font-size:12px"> v1.4</span></div><div class="abs" style="left:566px;top:15px;width:10px;height:1px;background:#fff"></div><div class="abs" style="left:611px;top:10px;width:10px;height:10px;border:1px solid #fff;border-radius:1.5px"></div><svg class="abs" style="left:657px;top:10px" width="10" height="10" viewBox="0 0 10 10"><path d="M0.3 0.3l9.4 9.4M9.7 0.3l-9.4 9.4" stroke="#fff" stroke-width="1.1"/></svg><div class="client" style="left:1px;top:31px;width:684px;height:511px;border-radius:0 0 7px 7px"><div class="lbl" style="left:0;width:684px;top:10px;text-align:center;font-size:18px;font-weight:bold;letter-spacing:0px">主要事件日志查询</div><div class="lbl" style="left:14px;top:47px"><span style="font-size:12px">起始日期</span><span style="font-size:13px">:</span></div><div class="lbl" style="left:14px;top:77px"><span style="font-size:12px">截止日期</span><span style="font-size:13px">:</span></div><div class="dtp" style="left:74px;top:44px"><span>2026-02-19</span><svg style="position:absolute;left:102px;top:4px" width="22" height="13" viewBox="0 0 22 13"><path d="M1.8 0.6h7.4q1.2 0 1.2 1.2v8q0 0.6-0.6 1.2l-0.4 0.4q-0.6 0.6-1.2 0.6H1.8q-1.2 0-1.2-1.2V1.8q0-1.2 1.2-1.2z" fill="#fff" stroke="#5a5a5a" stroke-width="1.15"/><rect x="2" y="2.6" width="7" height="7" fill="#b0b8c6"/><g fill="#fff"><rect x="2.8" y="3.4" width="1.2" height="1.2"/><rect x="4.9" y="3.4" width="1.2" height="1.2"/><rect x="7" y="3.4" width="1.2" height="1.2"/><rect x="2.8" y="5.5" width="1.2" height="1.2"/><rect x="4.9" y="5.5" width="1.2" height="1.2"/><rect x="7" y="5.5" width="1.2" height="1.2"/><rect x="2.8" y="7.6" width="1.2" height="1.2"/><rect x="4.9" y="7.6" width="1.2" height="1.2"/><rect x="7" y="7.6" width="1.2" height="1.2"/></g><path d="M8.4 10.6l2-2v2z" fill="#333"/><path d="M12.8 4.4h7l-3.5 3.8z" fill="#48487e"/></svg></div><div class="dtp" style="left:74px;top:74px"><span>2026-03-21</span><svg style="position:absolute;left:102px;top:4px" width="22" height="13" viewBox="0 0 22 13"><path d="M1.8 0.6h7.4q1.2 0 1.2 1.2v8q0 0.6-0.6 1.2l-0.4 0.4q-0.6 0.6-1.2 0.6H1.8q-1.2 0-1.2-1.2V1.8q0-1.2 1.2-1.2z" fill="#fff" stroke="#5a5a5a" stroke-width="1.15"/><rect x="2" y="2.6" width="7" height="7" fill="#b0b8c6"/><g fill="#fff"><rect x="2.8" y="3.4" width="1.2" height="1.2"/><rect x="4.9" y="3.4" width="1.2" height="1.2"/><rect x="7" y="3.4" width="1.2" height="1.2"/><rect x="2.8" y="5.5" width="1.2" height="1.2"/><rect x="4.9" y="5.5" width="1.2" height="1.2"/><rect x="7" y="5.5" width="1.2" height="1.2"/><rect x="2.8" y="7.6" width="1.2" height="1.2"/><rect x="4.9" y="7.6" width="1.2" height="1.2"/><rect x="7" y="7.6" width="1.2" height="1.2"/></g><path d="M8.4 10.6l2-2v2z" fill="#333"/><path d="M12.8 4.4h7l-3.5 3.8z" fill="#48487e"/></svg></div><div class="btn" style="left:214px;top:44px"><span style="font-size:12px">今天</span></div><div class="btn" style="left:302px;top:44px"><span style="font-size:12px">昨天</span></div><div class="btn" style="left:390px;top:44px"><span style="font-size:12px">前天</span></div><div class="btn" style="left:214px;top:74px;border:2px solid #0067c0;line-height:20px;"><span style="font-size:12px">前一个月</span></div><div class="btn" style="left:302px;top:74px;"><span style="font-size:12px">前三个月</span></div><div class="btn" style="left:390px;top:74px;"><span style="font-size:12px">全部日期</span></div><div class="gb" style="left:480px;top:44px;width:190px;height:53px"></div><div class="lbl" style="left:487px;top:36px;background:#f0f0f0;padding:0 2px;font-size:13px"><span style="font-size:12px">事件类型</span></div><div class="cb" style="left:490px;top:56px"><svg style="position:absolute;left:0;top:0" width="13" height="13" viewBox="0 0 13 13"><path d="M3 6.5l2.5 2.5 4.8-5" fill="none" stroke="#fff" stroke-width="1.2"/></svg></div><div class="lbl" style="left:509px;top:55px"><span style="font-size:12px">启动</span></div><div class="cb" style="left:549px;top:56px"><svg style="position:absolute;left:0;top:0" width="13" height="13" viewBox="0 0 13 13"><path d="M3 6.5l2.5 2.5 4.8-5" fill="none" stroke="#fff" stroke-width="1.2"/></svg></div><div class="lbl" style="left:568px;top:55px"><span style="font-size:12px">休眠</span><span style="font-size:13px"> / </span><span style="font-size:12px">唤醒</span></div><div class="cb" style="left:490px;top:77px"><svg style="position:absolute;left:0;top:0" width="13" height="13" viewBox="0 0 13 13"><path d="M3 6.5l2.5 2.5 4.8-5" fill="none" stroke="#fff" stroke-width="1.2"/></svg></div><div class="lbl" style="left:509px;top:76px"><span style="font-size:12px">关机</span></div><div class="cb" style="left:549px;top:77px"><svg style="position:absolute;left:0;top:0" width="13" height="13" viewBox="0 0 13 13"><path d="M3 6.5l2.5 2.5 4.8-5" fill="none" stroke="#fff" stroke-width="1.2"/></svg></div><div class="lbl" style="left:568px;top:76px"><span style="font-size:12px">错误</span></div><div class="cbu" style="left:606px;top:77px"></div><div class="lbl" style="left:625px;top:76px"><span style="font-size:12px">其他</span></div><div class="grid" style="left:15px;top:104px;width:655px;height:344px"><div class="hdr" style="width:636px"><div class="hc" style="left:0px;width:141px"></div><div class="hc" style="left:141px;width:70px"></div><div class="hc" style="left:211px;width:60px"></div><div class="hc" style="left:271px;width:125px"></div><div class="hc" style="left:396px;width:70px"></div><div class="hc" style="left:466px;width:170px"></div><div class="abs" style="left:22px;width:80px;top:0;height:25px;line-height:25px;text-align:center;font-weight:bold"><span style="font-size:12px">时间</span></div><div class="abs" style="left:136px;width:80px;top:0;height:25px;line-height:25px;text-align:center;font-weight:bold"><span style="font-size:12px">事件</span><span style="font-size:12.6px">ID</span></div><div class="abs" style="left:190.6px;width:80px;top:0;height:25px;line-height:25px;text-align:center;font-weight:bold"><span style="font-size:12px">级别</span></div><div class="abs" style="left:283px;width:80px;top:0;height:25px;line-height:25px;text-align:center;font-weight:bold"><span style="font-size:12px">来源</span></div><div class="abs" style="left:380.6px;width:80px;top:0;height:25px;line-height:25px;text-align:center;font-weight:bold"><span style="font-size:12px">类型</span></div><div class="abs" style="left:501px;width:80px;top:0;height:25px;line-height:25px;text-align:center;font-weight:bold"><span style="font-size:12px">描述</span></div></div><div class="row" style="top:25px;width:636px;background:#90ee90"><div class="c" style="left:0px;width:141px;background:#0078d7;color:#fff;"><span style="font-size:12.6px">2026-02-24 08:23:31</span></div><div class="c" style="left:141px;width:70px;"><span style="font-size:12.6px">6005</span></div><div class="c" style="left:211px;width:60px;"><span style="font-size:12px">信息</span></div><div class="c" style="left:271px;width:125px;"><span style="font-size:12px">事件日志</span></div><div class="c" style="left:396px;width:70px;"><span style="font-size:12px">启动</span></div><div class="c" style="left:466px;width:170px;text-align:left;padding-left:4px;"><span style="font-size:12px">系统已正常启动</span></div></div><div class="row" style="top:47px;width:636px;background:#90ee90"><div class="c" style="left:0px;width:141px;"><span style="font-size:12.6px">2026-02-24 08:23:23</span></div><div class="c" style="left:141px;width:70px;"><span style="font-size:12.6px">12</span></div><div class="c" style="left:211px;width:60px;"><span style="font-size:12px">信息</span></div><div class="c" style="left:271px;width:125px;"><span style="font-size:12.6px">Kernel General</span></div><div class="c" style="left:396px;width:70px;"><span style="font-size:12px">启动</span></div><div class="c" style="left:466px;width:170px;text-align:left;padding-left:4px;"><span style="font-size:12px">系统已启动，操作系统已加</span><span style="font-size:12.6px">...</span></div></div><div class="row" style="top:69px;width:636px;background:#90ee90"><div class="c" style="left:0px;width:141px;"><span style="font-size:12.6px">2026-02-24 08:23:23</span></div><div class="c" style="left:141px;width:70px;"><span style="font-size:12.6px">238</span></div><div class="c" style="left:211px;width:60px;"><span style="font-size:12px">信息</span></div><div class="c" style="left:271px;width:125px;"><span style="font-size:12px">系统启动</span></div><div class="c" style="left:396px;width:70px;"><span style="font-size:12px">启动</span></div><div class="c" style="left:466px;width:170px;text-align:left;padding-left:4px;"><span style="font-size:12.6px">EFI </span><span style="font-size:12px">时区偏移：</span><span style="font-size:12.6px"> 2047</span><span style="font-size:12px">。夏令</span><span style="font-size:12.6px">...</span></div></div><div class="row" style="top:91px;width:636px;background:#ffb6c1"><div class="c" style="left:0px;width:141px;"><span style="font-size:12.6px">2026-02-24 08:23:31</span></div><div class="c" style="left:141px;width:70px;"><span style="font-size:12.6px">7000</span></div><div class="c" style="left:211px;width:60px;"><span style="font-size:12px">错误</span></div><div class="c" style="left:271px;width:125px;"><span style="font-size:12px">服务管理器</span></div><div class="c" style="left:396px;width:70px;"><span style="font-size:12px">错误</span></div><div class="c" style="left:466px;width:170px;text-align:left;padding-left:4px;"><span style="font-size:12px">系统文件保护服务启动失败</span></div></div><div class="row" style="top:113px;width:636px;background:#add8e6"><div class="c" style="left:0px;width:141px;"><span style="font-size:12.6px">2026-02-24 08:23:31</span></div><div class="c" style="left:141px;width:70px;"><span style="font-size:12.6px">1</span></div><div class="c" style="left:211px;width:60px;"><span style="font-size:12px">信息</span></div><div class="c" style="left:271px;width:125px;"><span style="font-size:12px">文件系统</span></div><div class="c" style="left:396px;width:70px;"><span style="font-size:12px">休眠</span><span style="font-size:12.6px">/</span><span style="font-size:12px">唤醒</span></div><div class="c" style="left:466px;width:170px;text-align:left;padding-left:4px;"><span style="font-size:12px">系统从睡眠状态中唤醒</span></div></div><div class="row" style="top:135px;width:636px;background:#ffb6c1"><div class="c" style="left:0px;width:141px;"><span style="font-size:12.6px">2026-02-24 08:23:32</span></div><div class="c" style="left:141px;width:70px;"><span style="font-size:12.6px">7001</span></div><div class="c" style="left:211px;width:60px;"><span style="font-size:12px">错误</span></div><div class="c" style="left:271px;width:125px;"><span style="font-size:12px">服务管理器</span></div><div class="c" style="left:396px;width:70px;"><span style="font-size:12px">错误</span></div><div class="c" style="left:466px;width:170px;text-align:left;padding-left:4px;"><span style="font-size:12.6px">IP</span><span style="font-size:12px">硬件服务启动失败</span></div></div><div class="row" style="top:157px;width:636px;background:#ffb6c1"><div class="c" style="left:0px;width:141px;"><span style="font-size:12.6px">2026-02-24 08:23:33</span></div><div class="c" style="left:141px;width:70px;"><span style="font-size:12.6px">7001</span></div><div class="c" style="left:211px;width:60px;"><span style="font-size:12px">信息</span></div><div class="c" style="left:271px;width:125px;"><span style="font-size:12px">用户登录</span></div><div class="c" style="left:396px;width:70px;"><span style="font-size:12px">错误</span></div><div class="c" style="left:466px;width:170px;text-align:left;padding-left:4px;"><span style="font-size:12.6px">IP</span><span style="font-size:12px">硬件服务启动失败</span></div></div><div class="row" style="top:179px;width:636px;background:#add8e6"><div class="c" style="left:0px;width:141px;"><span style="font-size:12.6px">2026-02-24 18:36:18</span></div><div class="c" style="left:141px;width:70px;"><span style="font-size:12.6px">1</span></div><div class="c" style="left:211px;width:60px;"><span style="font-size:12px">信息</span></div><div class="c" style="left:271px;width:125px;"><span style="font-size:12.6px">Kernel General</span></div><div class="c" style="left:396px;width:70px;"><span style="font-size:12px">休眠</span><span style="font-size:12.6px">/</span><span style="font-size:12px">唤醒</span></div><div class="c" style="left:466px;width:170px;text-align:left;padding-left:4px;"><span style="font-size:12px">系统从睡眠状态中唤醒</span></div></div><div class="row" style="top:201px;width:636px;background:#add8e6"><div class="c" style="left:0px;width:141px;"><span style="font-size:12.6px">2026-02-24 18:36:18</span></div><div class="c" style="left:141px;width:70px;"><span style="font-size:12.6px">1</span></div><div class="c" style="left:211px;width:60px;"><span style="font-size:12px">信息</span></div><div class="c" style="left:271px;width:125px;"><span style="font-size:12.6px">Kernel General</span></div><div class="c" style="left:396px;width:70px;"><span style="font-size:12px">休眠</span><span style="font-size:12.6px">/</span><span style="font-size:12px">唤醒</span></div><div class="c" style="left:466px;width:170px;text-align:left;padding-left:4px;"><span style="font-size:12px">系统从睡眠状态中唤醒</span></div></div><div class="row" style="top:223px;width:636px;background:#add8e6"><div class="c" style="left:0px;width:141px;"><span style="font-size:12.6px">2026-02-24 18:36:18</span></div><div class="c" style="left:141px;width:70px;"><span style="font-size:12.6px">1</span></div><div class="c" style="left:211px;width:60px;"><span style="font-size:12px">信息</span></div><div class="c" style="left:271px;width:125px;"><span style="font-size:12.6px">Kernel General</span></div><div class="c" style="left:396px;width:70px;"><span style="font-size:12px">休眠</span><span style="font-size:12.6px">/</span><span style="font-size:12px">唤醒</span></div><div class="c" style="left:466px;width:170px;text-align:left;padding-left:4px;"><span style="font-size:12px">系统从睡眠状态中唤醒</span></div></div><div class="row" style="top:245px;width:636px;background:#f08080"><div class="c" style="left:0px;width:141px;"><span style="font-size:12.6px">2026-02-24 19:27:12</span></div><div class="c" style="left:141px;width:70px;"><span style="font-size:12.6px">1074</span></div><div class="c" style="left:211px;width:60px;"><span style="font-size:12px">信息</span></div><div class="c" style="left:271px;width:125px;"><span style="font-size:12.6px">User32</span></div><div class="c" style="left:396px;width:70px;"><span style="font-size:12px">关机</span></div><div class="c" style="left:466px;width:170px;text-align:left;padding-left:4px;"><span style="font-size:12px">用户发起关机或重启操作</span></div></div><div class="row" style="top:267px;width:636px;background:#f08080"><div class="c" style="left:0px;width:141px;"><span style="font-size:12.6px">2026-02-24 19:27:21</span></div><div class="c" style="left:141px;width:70px;"><span style="font-size:12.6px">6006</span></div><div class="c" style="left:211px;width:60px;"><span style="font-size:12px">信息</span></div><div class="c" style="left:271px;width:125px;"><span style="font-size:12px">事件日志</span></div><div class="c" style="left:396px;width:70px;"><span style="font-size:12px">关机</span></div><div class="c" style="left:466px;width:170px;text-align:left;padding-left:4px;"><span style="font-size:12px">系统已正常关机</span></div></div><div class="row" style="top:289px;width:636px;background:#90ee90"><div class="c" style="left:0px;width:141px;"><span style="font-size:12.6px">2026-02-25 08:29:11</span></div><div class="c" style="left:141px;width:70px;"><span style="font-size:12.6px">6005</span></div><div class="c" style="left:211px;width:60px;"><span style="font-size:12px">信息</span></div><div class="c" style="left:271px;width:125px;"><span style="font-size:12px">事件日志</span></div><div class="c" style="left:396px;width:70px;"><span style="font-size:12px">启动</span></div><div class="c" style="left:466px;width:170px;text-align:left;padding-left:4px;"><span style="font-size:12px">系统已正常启动</span></div></div><div class="row" style="top:311px;width:636px;background:#90ee90"><div class="c" style="left:0px;width:141px;"><span style="font-size:12.6px">2026-02-25 08:29:04</span></div><div class="c" style="left:141px;width:70px;"><span style="font-size:12.6px">12</span></div><div class="c" style="left:211px;width:60px;"><span style="font-size:12px">信息</span></div><div class="c" style="left:271px;width:125px;"><span style="font-size:12.6px">Kernel General</span></div><div class="c" style="left:396px;width:70px;"><span style="font-size:12px">启动</span></div><div class="c" style="left:466px;width:170px;text-align:left;padding-left:4px;"><span style="font-size:12px">系统已启动，操作系统已加</span><span style="font-size:12.6px">...</span></div></div><div class="row" style="top:333px;width:636px;background:#90ee90"><div class="c" style="left:0px;width:141px;"><span style="font-size:12.6px">2026-02-25 08:29:04</span></div><div class="c" style="left:141px;width:70px;"><span style="font-size:12.6px">238</span></div><div class="c" style="left:211px;width:60px;"><span style="font-size:12px">信息</span></div><div class="c" style="left:271px;width:125px;"><span style="font-size:12px">系统启动</span></div><div class="c" style="left:396px;width:70px;"><span style="font-size:12px">启动</span></div><div class="c" style="left:466px;width:170px;text-align:left;padding-left:4px;"><span style="font-size:12.6px">EFI </span><span style="font-size:12px">时区偏移：</span><span style="font-size:12.6px"> 2047</span><span style="font-size:12px">。夏令</span><span style="font-size:12.6px">...</span></div></div><div class="abs" style="left:636px;top:0;width:18px;height:343px;background:#f0f0f0"></div><div class="abs" style="left:644px;top:17px;width:2px;height:17px;background:#858585;border-radius:1px"></div><div class="abs" style="left:0;top:0;width:1px;height:342px;background:#a0a0a0"></div><div class="abs" style="left:0;top:0;width:636px;height:1px;background:#b4b4b4"></div></div><div class="btn" style="left:515px;top:455px;width:73px;height:30px;line-height:28px;font-weight:bold;font-size:14px">查询</div><div class="btn" style="left:596px;top:455px;width:73px;height:30px;line-height:28px;font-weight:bold;font-size:14px">退出</div><div class="abs" style="left:0;top:489px;width:684px;height:1px;background:#d7d7d7"></div><div class="lbl" style="left:4px;top:493px;color:#008000"><span style="font-size:12px">查询完成</span><span style="font-size:13px"> (10.868</span><span style="font-size:12px">秒</span><span style="font-size:13px">)</span></div><div class="lbl" style="right:19px;top:493px"><span style="font-size:12px">已找到</span><span style="font-size:13px"> 11774 </span><span style="font-size:12px">条记录</span><span style="font-size:13px"> | </span><span style="font-size:12px">已匹配</span><span style="font-size:13px"> 307 </span><span style="font-size:12px">条记录</span></div><svg style="position:absolute;left:671px;top:498px" width="12" height="12" viewBox="0 0 12 12"><g fill="#a0a0a0"><rect x="8" y="0" width="2" height="2"/><rect x="4" y="4" width="2" height="2"/><rect x="8" y="4" width="2" height="2"/><rect x="0" y="8" width="2" height="2"/><rect x="4" y="8" width="2" height="2"/><rect x="8" y="8" width="2" height="2"/></g></svg></div></div><div class="abs" style="left:232px;top:665px;width:731px;height:42px;background:#1f1f1f"></div><div class="abs" style="left:238px;top:672px;width:725px;height:35px;background:#262626;border-top:1px solid #3d3d3d;border-left:1px solid #3d3d3d;border-radius:6px 0 0 0"></div><div class="abs" style="left:340px;top:700px;width:231px;height:10px;background:#333;border-radius:4px"></div><svg class="abs" style="left:560px;top:690px" width="200" height="17" viewBox="0 0 200 17"><g fill="#444"><rect x="13" y="9" width="1" height="8"/><rect x="51" y="9" width="1" height="8"/><rect x="101" y="9" width="1" height="8"/><rect x="132" y="9" width="1" height="8"/><rect x="164" y="9" width="1" height="8"/></g><path d="M109 14l5 5M114 14l-5 5" stroke="#e05a3a" stroke-width="1.3"/><rect x="136.5" y="9.5" width="23" height="12" rx="3" fill="none" stroke="#8f7fd8" stroke-width="1.2"/><path d="M143 13v4M146 14l3 3" stroke="#e6e6e6" stroke-width="1.2"/><rect x="175" y="15" width="6" height="3" fill="#e0e0e0"/><path d="M63 16q2-2 4 0M96 16l3-2M101 16l-3-2" stroke="#666" stroke-width="1"/></svg><div class="abs" style="left:348px;top:703px;width:3px;height:4px;background:#ddd"></div><div class="abs" style="left:358px;top:702px;width:2px;height:5px;background:#ddd"></div><div class="lbl" style="left:247px;top:678px;color:#e0e0e0;font-size:12px">输出</div></body></html>
